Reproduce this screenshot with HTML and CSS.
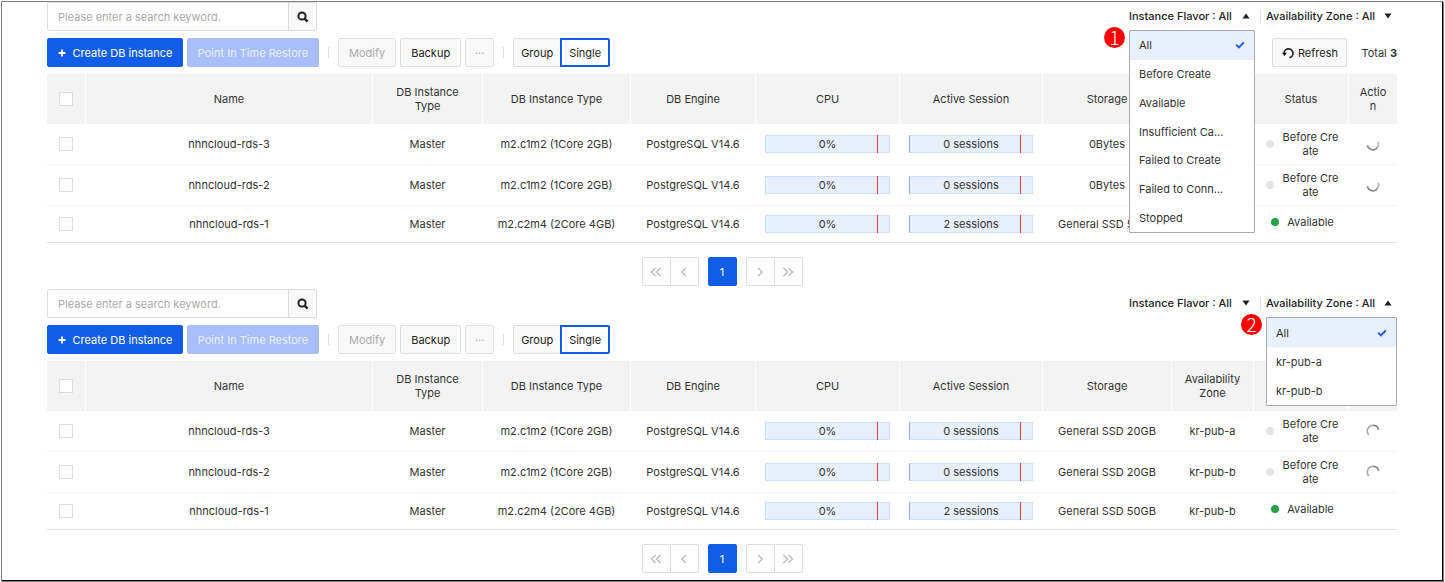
FILE: index.html
```html
<!DOCTYPE html>
<html lang="en">
<head>
<meta charset="utf-8">
<title>DB Instances</title>
<link rel="stylesheet" href="styles.css">
</head>
<body>
<svg class="sprite" aria-hidden="true">
  <symbol id="search" viewBox="0 0 12 12"><circle cx="5" cy="5" r="3.6" fill="none" stroke="currentColor" stroke-width="2"/><path d="M7.6 7.6 10.6 10.6" stroke="currentColor" stroke-width="2.4"/></symbol>
  <symbol id="plus" viewBox="0 0 8 8"><path d="M4 .5v7M.5 4h7" stroke="currentColor" stroke-width="1.8"/></symbol>
  <symbol id="up" viewBox="0 0 8 6"><path d="M4 .5 7.6 5.5H.4z" fill="currentColor"/></symbol>
  <symbol id="down" viewBox="0 0 8 6"><path d="M4 5.5.4.5h7.2z" fill="currentColor"/></symbol>
  <symbol id="check" viewBox="0 0 10 8"><path d="M1.2 3.8 4 6.4 8.8 1.4" fill="none" stroke="currentColor" stroke-width="2"/></symbol>
  <symbol id="refresh" viewBox="0 0 12 12"><path d="M2.2 7A4.4 4.4 0 1 1 7.4 10.6" fill="none" stroke="currentColor" stroke-width="1.7"/><path d="M0 5.8h5L2.4 9.2z" fill="currentColor"/></symbol>
  <symbol id="spin-bottom" viewBox="0 0 14 14"><path d="M1.4 8.2A5.6 5.6 0 0 0 11.6 10.2" fill="none" stroke="#8c8c8c" stroke-width="1.7"/><path d="M11.6 10.2A5.6 5.6 0 0 0 12 4.6" fill="none" stroke="#b0b0b0" stroke-width="1.6"/></symbol>
  <symbol id="spin-top" viewBox="0 0 14 14"><path d="M3 11A5.6 5.6 0 0 1 7 1.4" fill="none" stroke="#aaa" stroke-width="1.6"/><path d="M7 1.4A5.6 5.6 0 0 1 12.6 6" fill="none" stroke="#8c8c8c" stroke-width="1.7"/></symbol>
  <symbol id="first" viewBox="0 0 10 8"><path d="M4.6.6 1.2 4l3.4 3.4M8.8.6 5.4 4l3.4 3.4" fill="none" stroke="currentColor" stroke-width="1.1"/></symbol>
  <symbol id="prev" viewBox="0 0 10 8"><path d="M6.6.6 3.2 4l3.4 3.4" fill="none" stroke="currentColor" stroke-width="1.1"/></symbol>
  <symbol id="next" viewBox="0 0 10 8"><path d="M3.4.6 6.8 4 3.4 7.4" fill="none" stroke="currentColor" stroke-width="1.1"/></symbol>
  <symbol id="last" viewBox="0 0 10 8"><path d="M1.2.6 4.6 4 1.2 7.4M5.4.6 8.8 4 5.4 7.4" fill="none" stroke="currentColor" stroke-width="1.1"/></symbol>
</svg>
<main class="frame">
  <section class="panel">
    <div class="bar">
      <form class="search">
        <input type="text" placeholder="Please enter a search keyword." aria-label="Search keyword">
        <button type="button" aria-label="Search"><svg width="12" height="12"><use href="#search"/></svg></button>
      </form>
      <div class="filters">
        <div class="filter flavor">
          <button type="button" aria-expanded="true">Instance Flavor : All <svg width="8" height="6"><use href="#up"/></svg></button>
          <span class="mark">1</span>
          <ul class="menu tall">
            <li class="on">All <svg width="10" height="8"><use href="#check"/></svg></li>
            <li>Before Create</li>
            <li>Available</li>
            <li>Insufficient Ca...</li>
            <li>Failed to Create</li>
            <li>Failed to Conn...</li>
            <li>Stopped</li>
          </ul>
        </div>
        <div class="filter zone">
          <button type="button" aria-expanded="false">Availability Zone : All <svg width="8" height="6"><use href="#down"/></svg></button>
        </div>
      </div>
    </div>
    <div class="bar tools">
      <div class="group">
        <button type="button" class="btn primary"><svg width="8" height="8"><use href="#plus"/></svg>Create DB instance</button>
        <button type="button" class="btn restore" disabled>Point In Time Restore</button>
        <span class="rule"></span>
        <button type="button" class="btn" disabled>Modify</button>
        <button type="button" class="btn">Backup</button>
        <button type="button" class="btn more" disabled>···</button>
        <span class="rule"></span>
        <div class="toggle"><button type="button" class="btn">Group</button><button type="button" class="btn active">Single</button></div>
      </div>
      <div class="group end">
        <button type="button" class="btn refresh"><svg width="12" height="12"><use href="#refresh"/></svg>Refresh</button>
        <span class="total">Total <b>3</b></span>
      </div>
    </div>
    <table>
      <colgroup><col class="c-check"><col><col class="c-role"><col class="c-type"><col class="c-engine"><col class="c-cpu"><col class="c-session"><col class="c-storage"><col class="c-zone"><col class="c-status"><col class="c-action"></colgroup>
      <thead><tr><th><input type="checkbox" aria-label="Select all"></th><th>Name</th><th>DB Instance Type</th><th>DB Instance Type</th><th>DB Engine</th><th>CPU</th><th>Active Session</th><th>Storage</th><th></th><th>Status</th><th class="break">Action</th></tr></thead>
      <tbody>
        <tr><td><input type="checkbox" aria-label="Select nhncloud-rds-3"></td><td>nhncloud-rds-3</td><td>Master</td><td>m2.c1m2 (1Core 2GB)</td><td>PostgreSQL V14.6</td><td><div class="meter">0%</div></td><td><div class="meter sess">0 sessions</div></td><td>0Bytes</td><td></td><td><div class="status"><i></i><span>Before Create</span></div></td><td><svg width="14" height="14"><use href="#spin-bottom"/></svg></td></tr>
        <tr><td><input type="checkbox" aria-label="Select nhncloud-rds-2"></td><td>nhncloud-rds-2</td><td>Master</td><td>m2.c1m2 (1Core 2GB)</td><td>PostgreSQL V14.6</td><td><div class="meter">0%</div></td><td><div class="meter sess">0 sessions</div></td><td>0Bytes</td><td></td><td><div class="status"><i></i><span>Before Create</span></div></td><td><svg width="14" height="14"><use href="#spin-bottom"/></svg></td></tr>
        <tr><td><input type="checkbox" aria-label="Select nhncloud-rds-1"></td><td>nhncloud-rds-1</td><td>Master</td><td>m2.c2m4 (2Core 4GB)</td><td>PostgreSQL V14.6</td><td><div class="meter">0%</div></td><td><div class="meter sess">2 sessions</div></td><td>General SSD 50GB</td><td></td><td><div class="status ok"><i></i><span>Available</span></div></td><td></td></tr>
      </tbody>
    </table>
    <nav class="pager" aria-label="Pages">
      <div class="pair"><button type="button" aria-label="First"><svg width="12" height="10"><use href="#first"/></svg></button><button type="button" aria-label="Previous"><svg width="12" height="10"><use href="#prev"/></svg></button></div>
      <button type="button" class="current">1</button>
      <div class="pair"><button type="button" aria-label="Next"><svg width="12" height="10"><use href="#next"/></svg></button><button type="button" aria-label="Last"><svg width="12" height="10"><use href="#last"/></svg></button></div>
    </nav>
  </section>
  <section class="panel">
    <div class="bar">
      <form class="search">
        <input type="text" placeholder="Please enter a search keyword." aria-label="Search keyword">
        <button type="button" aria-label="Search"><svg width="12" height="12"><use href="#search"/></svg></button>
      </form>
      <div class="filters">
        <div class="filter flavor">
          <button type="button" aria-expanded="false">Instance Flavor : All <svg width="8" height="6"><use href="#down"/></svg></button>
        </div>
        <div class="filter zone">
          <button type="button" aria-expanded="true">Availability Zone : All <svg width="8" height="6"><use href="#up"/></svg></button>
          <span class="mark">2</span>
          <ul class="menu">
            <li class="on">All <svg width="10" height="8"><use href="#check"/></svg></li>
            <li>kr-pub-a</li>
            <li>kr-pub-b</li>
          </ul>
        </div>
      </div>
    </div>
    <div class="bar tools">
      <div class="group">
        <button type="button" class="btn primary"><svg width="8" height="8"><use href="#plus"/></svg>Create DB instance</button>
        <button type="button" class="btn restore" disabled>Point In Time Restore</button>
        <span class="rule"></span>
        <button type="button" class="btn" disabled>Modify</button>
        <button type="button" class="btn">Backup</button>
        <button type="button" class="btn more" disabled>···</button>
        <span class="rule"></span>
        <div class="toggle"><button type="button" class="btn">Group</button><button type="button" class="btn active">Single</button></div>
      </div>
    </div>
    <table>
      <colgroup><col class="c-check"><col><col class="c-role"><col class="c-type"><col class="c-engine"><col class="c-cpu"><col class="c-session"><col class="c-storage"><col class="c-zone"><col class="c-status"><col class="c-action"></colgroup>
      <thead><tr><th><input type="checkbox" aria-label="Select all"></th><th>Name</th><th>DB Instance Type</th><th>DB Instance Type</th><th>DB Engine</th><th>CPU</th><th>Active Session</th><th>Storage</th><th>Availability Zone</th><th></th><th></th></tr></thead>
      <tbody>
        <tr><td><input type="checkbox" aria-label="Select nhncloud-rds-3"></td><td>nhncloud-rds-3</td><td>Master</td><td>m2.c1m2 (1Core 2GB)</td><td>PostgreSQL V14.6</td><td><div class="meter">0%</div></td><td><div class="meter sess">0 sessions</div></td><td>General SSD 20GB</td><td>kr-pub-a</td><td><div class="status"><i></i><span>Before Create</span></div></td><td><svg width="14" height="14"><use href="#spin-top"/></svg></td></tr>
        <tr><td><input type="checkbox" aria-label="Select nhncloud-rds-2"></td><td>nhncloud-rds-2</td><td>Master</td><td>m2.c1m2 (1Core 2GB)</td><td>PostgreSQL V14.6</td><td><div class="meter">0%</div></td><td><div class="meter sess">0 sessions</div></td><td>General SSD 20GB</td><td>kr-pub-b</td><td><div class="status"><i></i><span>Before Create</span></div></td><td><svg width="14" height="14"><use href="#spin-top"/></svg></td></tr>
        <tr><td><input type="checkbox" aria-label="Select nhncloud-rds-1"></td><td>nhncloud-rds-1</td><td>Master</td><td>m2.c2m4 (2Core 4GB)</td><td>PostgreSQL V14.6</td><td><div class="meter">0%</div></td><td><div class="meter sess">2 sessions</div></td><td>General SSD 50GB</td><td>kr-pub-b</td><td><div class="status ok"><i></i><span>Available</span></div></td><td></td></tr>
      </tbody>
    </table>
    <nav class="pager" aria-label="Pages">
      <div class="pair"><button type="button" aria-label="First"><svg width="12" height="10"><use href="#first"/></svg></button><button type="button" aria-label="Previous"><svg width="12" height="10"><use href="#prev"/></svg></button></div>
      <button type="button" class="current">1</button>
      <div class="pair"><button type="button" aria-label="Next"><svg width="12" height="10"><use href="#next"/></svg></button><button type="button" aria-label="Last"><svg width="12" height="10"><use href="#last"/></svg></button></div>
    </nav>
  </section>
</main>
</body>
</html>
```
FILE: styles.css
```css
* { box-sizing: border-box; }
body { margin: 0; padding: 1px; background: #fff; color: #333; font: 11px/14px Inter, "Liberation Sans", sans-serif; }
button, input { font: inherit; color: inherit; margin: 0; }
button { cursor: pointer; }
button svg { display: block; flex: none; }
.sprite { display: none; }
.frame { margin-right: 1px; padding: 0 45px 4px; border: 1px solid #808080; border-right-color: #000; border-bottom-color: #000; box-shadow: 1px 1px 0 #808080; }
.panel { padding-bottom: 3px; }
.bar { display: flex; justify-content: space-between; margin-bottom: 7px; height: 29px; }

.search { display: flex; width: 270px; border: 1px solid #ddd; border-radius: 2px; }
.search input { flex: 1; min-width: 0; border: 0; padding: 0 10px; background: #fff; outline: 0; }
.search input::placeholder { color: #aaa; opacity: 1; }
.search button { display: grid; place-items: center; width: 28px; padding: 0; border: 0; border-left: 1px solid #ddd; background: #f9f9f9; color: #222; }

.filters { display: flex; }
.filter { position: relative; }
.filter button { display: flex; align-items: center; justify-content: space-between; width: 100%; height: 28px; padding: 0 5px 0 0; border: 0; background: none; font-weight: 500; color: #222; white-space: nowrap; }
.flavor { width: 126px; margin-right: 11px; }
.zone { width: 131px; }
.zone::before { content: ""; position: absolute; left: -6px; top: 9px; height: 11px; border-left: 1px solid #e0e0e0; }
.mark { position: absolute; left: -25px; top: 25px; width: 21px; height: 21px; border-radius: 50%; background: #f00; color: #fff; font: 300 19px/20px "Noto Sans CJK JP", sans-serif; text-align: center; }
.menu { position: absolute; z-index: 2; left: 0; right: 0; top: 28px; display: flex; flex-direction: column; margin: 0; padding: 0; list-style: none; background: #fff; border: 1px solid #aaa; border-radius: 1px; }
.menu.tall { height: 203px; }
.menu li { flex: 1 1 auto; display: flex; align-items: center; justify-content: space-between; height: 29px; padding: 0 9px; }
.menu .on { background: #e8f0fe; }
.menu .on svg { color: #1a62e8; }

.group { display: flex; align-items: center; gap: 4px; }
.btn { display: flex; align-items: center; justify-content: center; height: 29px; padding: 0 10px; border: 1px solid #ddd; border-radius: 2px; background: #f9f9f9; color: #222; white-space: nowrap; }
.btn:disabled { color: #aaa; border-color: #e2e2e2; }
.btn.primary { width: 136px; gap: 7px; border-color: #125de6; background: #125de6; color: #fff; }
.btn.restore, .btn.restore:disabled { width: 132px; border-color: #a8bff9; background: #a8bff9; color: #e8effe; }
.btn.more { width: 29px; padding: 0; }
.rule { height: 11px; margin: 0 5px; border-left: 1px solid #ddd; }
.toggle { display: flex; }
.toggle .btn { padding: 0 7px; border-right: 0; border-radius: 2px 0 0 2px; }
.toggle .btn.active { padding: 0 7px; border: 2px solid #125de6; background: #fff; border-radius: 0 2px 2px 0; }
.end { gap: 14px; }
.refresh { width: 75px; padding: 0; gap: 4px; }
.total b { font-weight: 700; }

table { width: 100%; table-layout: fixed; border-collapse: separate; border-spacing: 0; border-bottom: 1px solid #e2e2e2; }
.c-check { width: 39px; }
.c-role { width: 110px; }
.c-type { width: 148px; }
.c-engine { width: 125px; }
.c-cpu { width: 144px; }
.c-session { width: 143px; }
.c-storage { width: 129px; }
.c-zone { width: 82px; }
.c-status { width: 95px; }
.c-action { width: 48px; }
th, td { padding: 0 10px 0 9px; text-align: center; vertical-align: middle; }
th { height: 50px; padding: 0 9px; background: #f3f3f3; border-right: 1px solid #fff; font-weight: 400; }
th:last-child { border-right: 0; }
.break { word-break: break-all; }
td { height: 41px; border-bottom: 1px solid #f2f2f2; white-space: nowrap; }
tr:last-child td { height: 36px; border-bottom: 0; }
th:first-child { padding: 0; }
td:first-child { padding: 0 1px 0 0; }
td svg { display: block; margin: 0 auto; }
input[type="checkbox"] { appearance: none; display: block; width: 14px; height: 14px; margin: 0 auto; border: 1px solid #ddd; background: #fff; }
.meter { position: relative; height: 18px; border: 1px solid #cddffc; background: #e8f0fe; line-height: 16px; }
.meter::after { content: ""; position: absolute; top: -1px; bottom: -1px; left: 90%; width: 1px; background: #dc3d48; }
.sess { border-left-color: #8fb0f5; }
.status { display: flex; align-items: center; justify-content: center; gap: 8px; padding-left: 3px; }
.status i { flex: none; width: 8px; height: 8px; border-radius: 50%; background: #e4e4e4; }
.status span { max-width: 57px; white-space: normal; word-break: break-all; }
.status.ok { padding-bottom: 4px; }
.ok i { background: #23a347; }

.pager { display: flex; justify-content: center; gap: 9px; margin-top: 14px; }
.pager button { display: grid; place-items: center; width: 29px; height: 29px; padding: 0; border: 1px solid #ddd; background: #fff; color: #bbb; }
.pair { display: flex; }
.pair button + button { border-left: 0; width: 28px; border-radius: 0 2px 2px 0; }
.pair button:first-child { border-radius: 2px 0 0 2px; }
.pager .current { border-color: #125de6; border-radius: 2px; background: #125de6; color: #fff; }
```
